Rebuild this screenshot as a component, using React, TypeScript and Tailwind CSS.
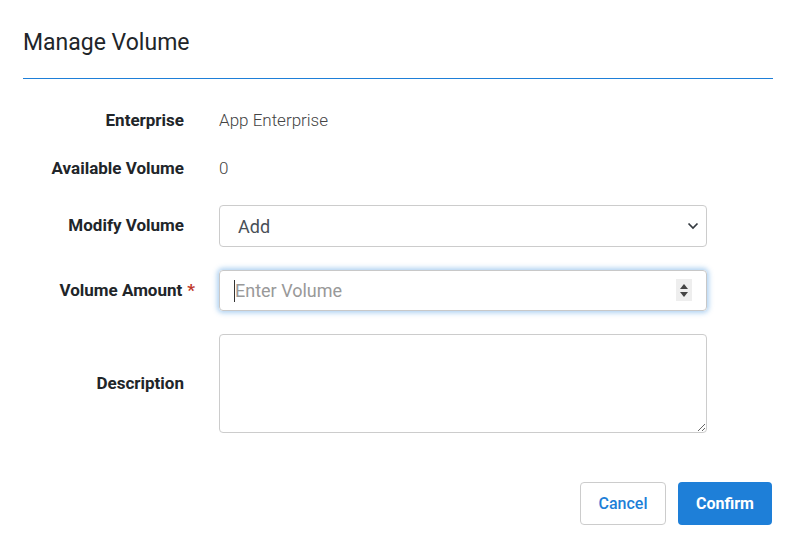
export default function App() {
  return (
    <div className="min-h-screen bg-white font-['Roboto',sans-serif] text-[#212529]">
      <header className="mx-[23px] pt-[28px] pb-[20px] border-b border-b-[#1e7fd8]">
        <h1 className="text-[23px] leading-[30px]">Manage Volume</h1>
      </header>

      <main className="mx-[23px] pt-[18px]">
        <div className="flex items-center h-[48px]">
          <p className="w-[161px] text-right text-[17px] font-bold">Enterprise</p>
          <p className="ml-[35px] text-[17px] font-light text-[#444]">App Enterprise</p>
        </div>

        <div className="flex items-center h-[48px]">
          <p className="w-[161px] text-right text-[17px] font-bold">Available Volume</p>
          <p className="ml-[35px] text-[17px] font-light text-[#444]">0</p>
        </div>

        <div className="flex items-center mt-[12px]">
          <p className="w-[161px] text-right text-[17px] font-bold">Modify Volume</p>
          <div className="ml-[35px] relative w-[488px] h-[42px] border border-[#ccc] rounded-[4px] flex items-center pl-[18px]">
            <span className="text-[18px] text-[#495057]">Add</span>
            <svg className="absolute right-[7px] top-[16px]" width="12" height="8" viewBox="0 0 12 8" fill="none">
              <path d="M1.5 1.5 6 6l4.5-4.5" stroke="#343a40" strokeWidth="1.7" />
            </svg>
          </div>
        </div>

        <div className="flex items-center mt-[23px]">
          <p className="w-[172px] text-right text-[17px] font-bold">
            Volume Amount<span className="text-[#c0392b] ml-[5px]">*</span>
          </p>
          <div className="ml-[24px] relative w-[488px] h-[41px] border border-[#c8c8c8] rounded-[4px] shadow-[0_0_5px_2px_rgba(30,127,216,0.35)] flex items-center pl-[15px]">
            <span className="absolute left-[14px] top-[9px] w-[1px] h-[22px] bg-[#333]"></span>
            <input
              type="text"
              placeholder="Enter Volume"
              className="w-full outline-none text-[18px] placeholder:text-[#999]"
            />
            <div className="absolute right-[14px] top-[8px] w-[16px] h-[22px] bg-[#eee] flex flex-col items-center justify-center gap-[3px]">
              <svg width="8" height="5" viewBox="0 0 8 5"><path d="M4 0 8 5H0z" fill="#444" /></svg>
              <svg width="8" height="5" viewBox="0 0 8 5"><path d="M0 0h8L4 5z" fill="#444" /></svg>
            </div>
          </div>
        </div>

        <div className="flex items-center mt-[23px]">
          <p className="w-[161px] text-right text-[17px] font-bold">Description</p>
          <textarea className="ml-[35px] w-[488px] h-[99px] border border-[#ccc] rounded-[4px] outline-none"></textarea>
        </div>

        <div className="flex justify-end gap-[12px] mt-[49px] pr-[1px]">
          <button className="w-[86px] h-[43px] border border-[#ccc] rounded-[4px] text-[#1e7fd8] text-[16px] font-medium">
            Cancel
          </button>
          <button className="w-[94px] h-[43px] bg-[#1e7fd8] rounded-[4px] text-white text-[16px] font-bold">
            Confirm
          </button>
        </div>
      </main>
    </div>
  );
}
